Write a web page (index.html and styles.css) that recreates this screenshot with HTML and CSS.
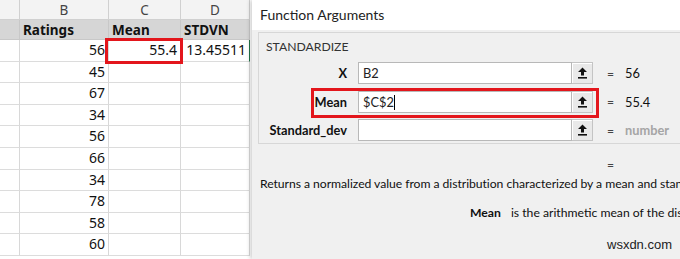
FILE: index.html
```html
<!DOCTYPE html>
<html lang="en">
<head>
  <meta charset="UTF-8" />
  <title>Function Arguments</title>
  <link rel="stylesheet" href="styles.css">
</head>
<body>

<div class="sheet">
  <div class="cell colhead"></div>
  <div class="cell colhead">B</div>
  <div class="cell colhead">C</div>
  <div class="cell colhead">D</div>

  <div class="cell hdr"></div>
  <div class="cell hdr">Ratings</div>
  <div class="cell hdr">Mean</div>
  <div class="cell hdr">STDVN</div>

  <div class="cell"></div>
  <div class="cell num">56</div>
  <div class="cell num picked">55.4</div>
  <div class="cell num active">13.45511</div>

  <div class="cell"></div><div class="cell num">45</div><div class="cell"></div><div class="cell"></div>
  <div class="cell"></div><div class="cell num">67</div><div class="cell"></div><div class="cell"></div>
  <div class="cell"></div><div class="cell num">34</div><div class="cell"></div><div class="cell"></div>
  <div class="cell"></div><div class="cell num">56</div><div class="cell"></div><div class="cell"></div>
  <div class="cell"></div><div class="cell num">66</div><div class="cell"></div><div class="cell"></div>
  <div class="cell"></div><div class="cell num">34</div><div class="cell"></div><div class="cell"></div>
  <div class="cell"></div><div class="cell num">78</div><div class="cell"></div><div class="cell"></div>
  <div class="cell"></div><div class="cell num">58</div><div class="cell"></div><div class="cell"></div>
  <div class="cell"></div><div class="cell num">60</div><div class="cell"></div><div class="cell"></div>
</div>

<div class="dialog">
  <div class="dlg-title">Function Arguments</div>

  <div class="dlg-body">
    <div class="group">
      <div class="fn-name">STANDARDIZE</div>

      <div class="arg">
        <label>X</label>
        <div class="field">B2</div>
        <div class="pick"><svg width="11" height="12" viewBox="0 0 11 12"><path d="M5.5 0.5 L10 5 H7 V8.5 H4 V5 H1 Z" fill="#111"/><rect x="1" y="10" width="9" height="1.6" fill="#111"/></svg></div>
        <span class="eq">=</span>
        <span class="val">56</span>
      </div>

      <div class="arg hl">
        <label>Mean</label>
        <div class="field">$C$2<span class="caret"></span></div>
        <div class="pick"><svg width="11" height="12" viewBox="0 0 11 12"><path d="M5.5 0.5 L10 5 H7 V8.5 H4 V5 H1 Z" fill="#111"/><rect x="1" y="10" width="9" height="1.6" fill="#111"/></svg></div>
        <span class="eq">=</span>
        <span class="val">55.4</span>
      </div>

      <div class="arg">
        <label>Standard_dev</label>
        <div class="field"></div>
        <div class="pick"><svg width="11" height="12" viewBox="0 0 11 12"><path d="M5.5 0.5 L10 5 H7 V8.5 H4 V5 H1 Z" fill="#111"/><rect x="1" y="10" width="9" height="1.6" fill="#111"/></svg></div>
        <span class="eq">=</span>
        <span class="val hint">number</span>
      </div>
    </div>

    <div class="result"><span class="eq">=</span></div>

    <p class="desc">Returns a normalized value from a distribution characterized by a mean and standa</p>

    <p class="arg-help"><b>Mean</b><span>is the arithmetic mean of the dist</span></p>

    <div class="mark">wsxdn.com</div>
  </div>
</div>

</body>
</html>
```

FILE: styles.css
```css
body {
  margin: 0;
  width: 680px;
  height: 259px;
  overflow: hidden;
  display: flex;
  background: #fff;
  font-family: 'Noto Sans', 'Open Sans', sans-serif;
}

/* spreadsheet */

.sheet {
  width: 250px;
  flex-shrink: 0;
  display: grid;
  grid-template-columns: 20px 89px 72px 69px;
  grid-template-rows: 20px 20px;
  grid-auto-rows: 21.6px;
  font-size: 14px;
  color: #111;
}

.cell {
  box-sizing: border-box;
  border-right: 1px solid #d8d8d8;
  border-bottom: 1px solid #dcdcdc;
  padding: 0 3px;
  line-height: 20px;
  white-space: nowrap;
}

.colhead {
  background: #f3f3f3;
  border-color: #d0d0d0;
  color: #444;
  text-align: center;
  font-size: 13.5px;
}

.hdr {
  background: #d6d6d6;
  font-weight: bold;
  border-color: #c8c8c8;
  font-size: 13.5px;
}

.num {
  text-align: right;
}

.picked {
  position: relative;
}

.picked::after {
  content: "";
  position: absolute;
  left: -4px;
  top: -2px;
  right: -3px;
  bottom: -3px;
  border: 3px solid #e3161c;
}

.active {
  border-right: 1px solid #217346;
}

/* dialog */

.dialog {
  flex: 1;
  min-width: 0;
  overflow: hidden;
  margin-left: 2px;
  background: #f0f0f0;
  box-shadow: -2px 0 4px rgba(0,0,0,0.18);
  color: #111;
  font-family: Lato, 'Noto Sans', sans-serif;
  font-size: 12.2px;
}

.dlg-title {
  height: 30px;
  line-height: 30px;
  padding-left: 8px;
  background: #fff;
  font-size: 14px;
  color: #222;
}

.dlg-body {
  padding: 2px 0 0 6px;
}

.group {
  border: 1px solid #d7d7d7;
  border-right: none;
  padding: 6px 0 2px 7px;
}

.fn-name {
  line-height: 16px;
  color: #333;
}

.arg {
  position: relative;
  display: flex;
  align-items: center;
  height: 22px;
  margin-top: 7px;
}

.arg + .arg {
  margin-top: 6.5px;
}

.arg label {
  width: 81px;
  text-align: right;
  font-weight: bold;
  font-size: 12.8px;
  margin-right: 11px;
}

.field {
  box-sizing: border-box;
  width: 214px;
  height: 22px;
  border: 1px solid #b8b8b8;
  background: #fff;
  padding-left: 4px;
  line-height: 20px;
  font-size: 12.8px;
  color: #222;
}

.caret {
  display: inline-block;
  width: 1px;
  height: 15px;
  background: #000;
  vertical-align: -3px;
}

.pick {
  box-sizing: border-box;
  width: 21px;
  height: 22px;
  border: 1px solid #c4c4c4;
  border-left: none;
  background: #e9e9e9;
  box-shadow: inset 1px 1px 0 #fff;
  display: flex;
  align-items: center;
  justify-content: center;
}

.eq {
  margin-left: 14px;
  width: 18px;
  color: #444;
}

.val {
  font-size: 12.8px;
}

.hint {
  color: #a5a5a5;
  font-weight: bold;
}

.hl::after {
  content: "";
  position: absolute;
  left: 45px;
  top: -3px;
  width: 282px;
  height: 24px;
  border: 3px solid #e3161c;
}

.result {
  height: 16px;
  padding: 13px 0 0 335px;
  line-height: 16px;
}

.desc {
  margin: 2px 0 0 2px;
  white-space: nowrap;
  line-height: 18px;
  letter-spacing: -0.05px;
}

.arg-help {
  margin: 11px 0 0 212px;
  white-space: nowrap;
  line-height: 18px;
}

.arg-help span {
  margin-left: 10px;
}

.mark {
  margin: 15px 0 0 349px;
  font-family: 'Liberation Sans', sans-serif;
  font-size: 13px;
  color: #222;
}
```
